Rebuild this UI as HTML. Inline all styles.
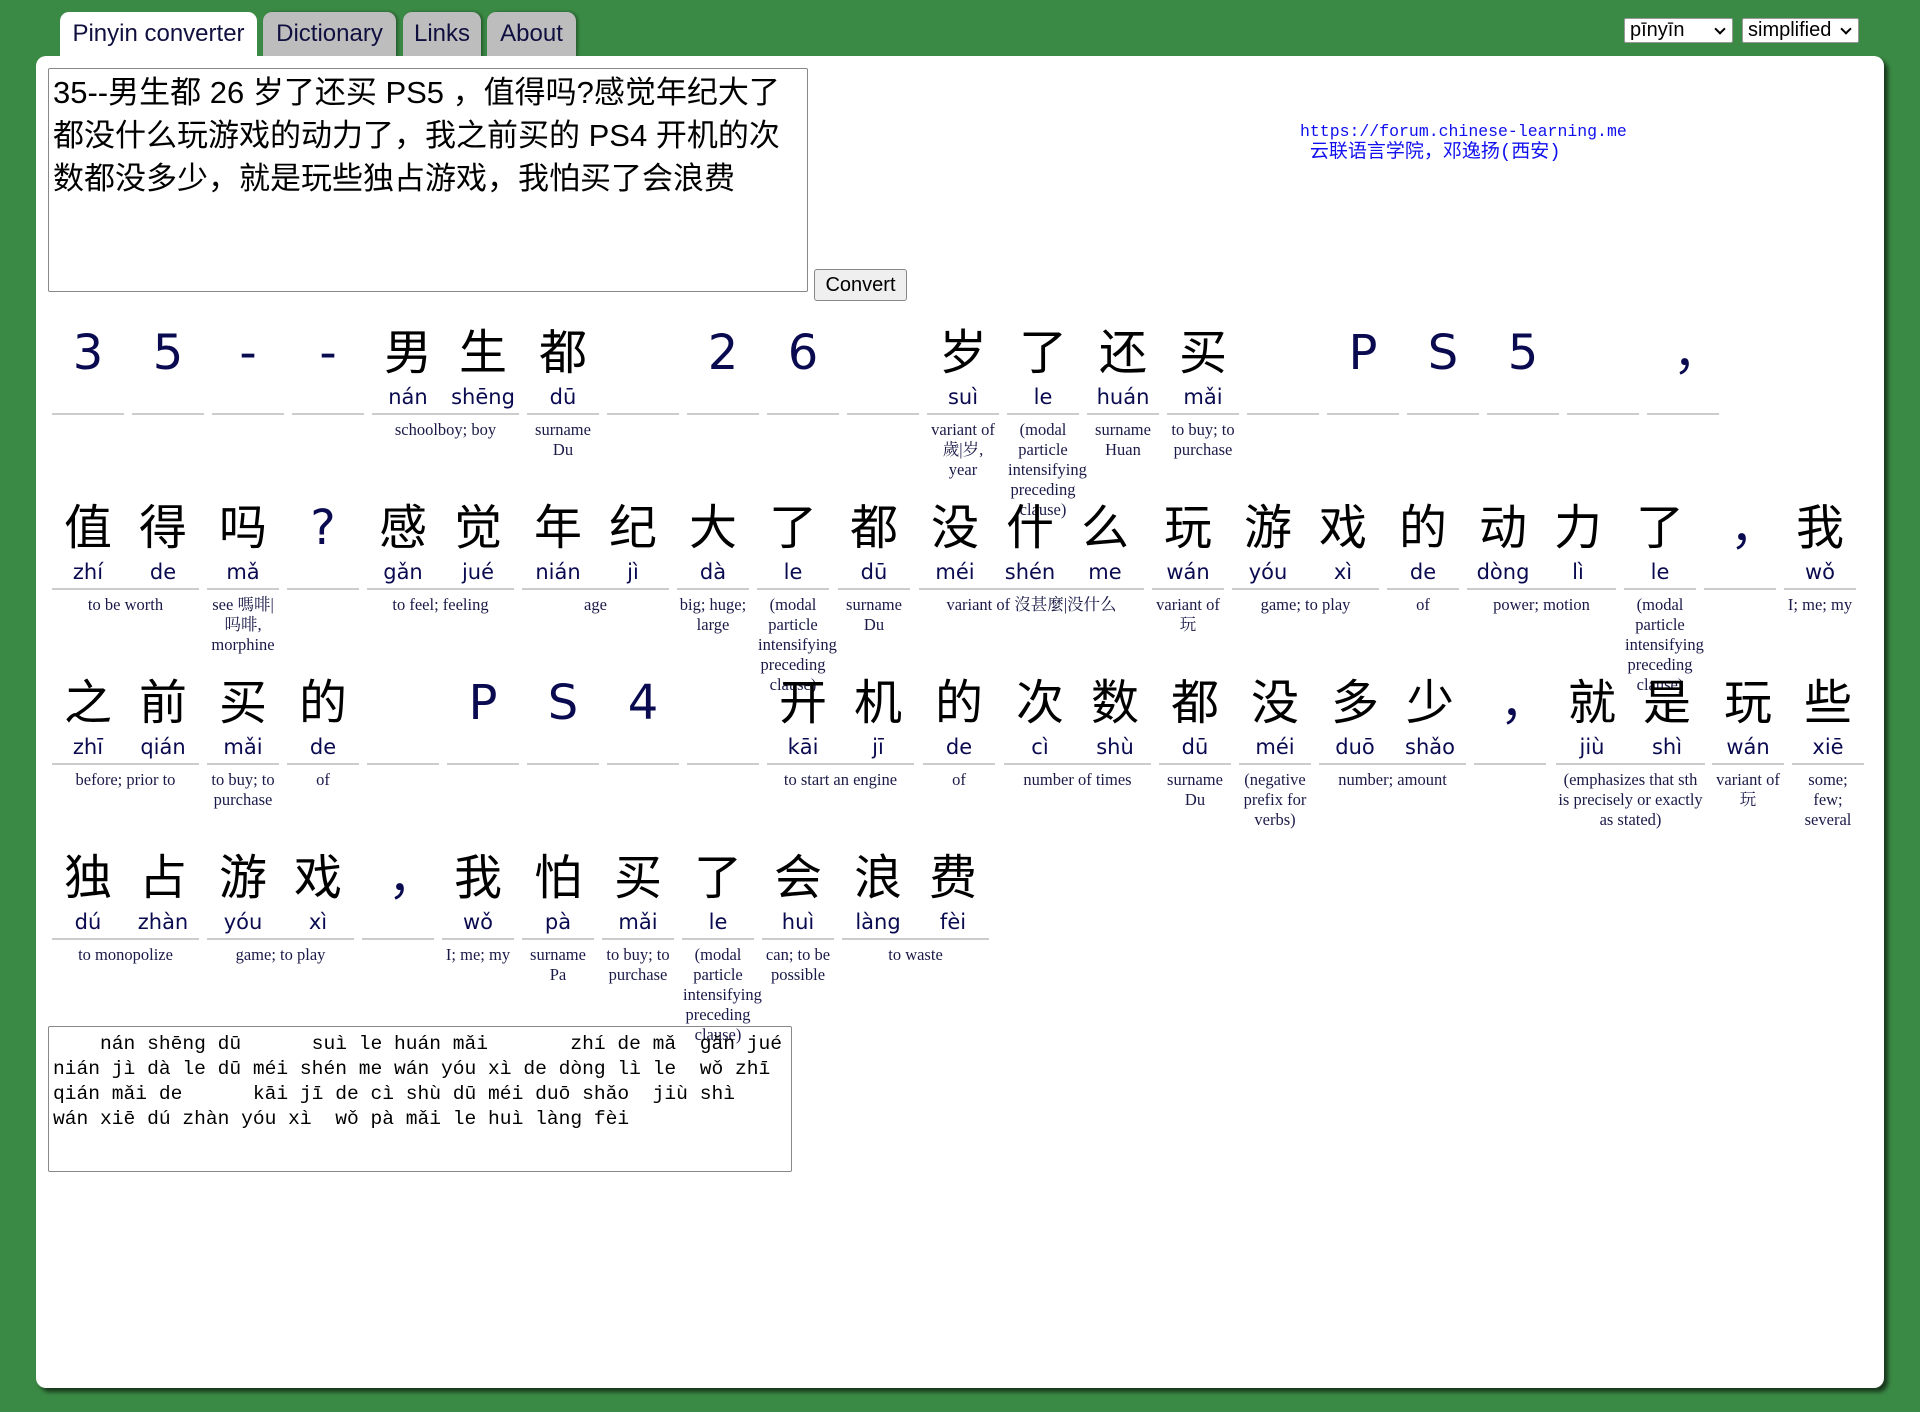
<!DOCTYPE html>
<html><head><meta charset="utf-8">
<style>
*{box-sizing:border-box}
body{margin:0;width:1920px;height:1412px;background:#3a8a45;position:relative;overflow:hidden;font-family:"Liberation Sans","Noto Sans CJK SC",sans-serif}
.tab{position:absolute;top:12px;height:46px;background:#bdbdbd;border-radius:9px 9px 0 0;font-size:24px;color:#101040;text-align:center;line-height:44px;box-shadow:2px 0 3px rgba(0,0,0,.35)}
.tab.a{background:#fff;z-index:2;box-shadow:none}
.panel{position:absolute;left:36px;top:56px;width:1848px;height:1332px;background:#fff;border-radius:10px;box-shadow:4px 4px 4px rgba(0,0,0,.6)}
.sel{position:absolute;top:18px;height:25px;background:#fff;border:1px solid #999;border-radius:2px;font-size:20px;line-height:23px;padding-left:5px;color:#000}
.sel:after{content:"";position:absolute;right:8px;top:6px;width:6px;height:6px;border-right:2px solid #000;border-bottom:2px solid #000;transform:rotate(45deg)}
.ta{position:absolute;left:48px;top:68px;width:760px;height:224px;border:1px solid #888;border-radius:2px;font-size:31px;line-height:43px;padding:2px 4px;color:#000;font-family:"Liberation Sans","Noto Sans CJK SC",sans-serif}
.btn{position:absolute;left:814px;top:269px;width:93px;height:32px;border:1px solid #888;border-radius:3px;background:#efefef;font-size:20px;text-align:center;line-height:30px}
.lnk{position:absolute;left:1300px;top:121px;font-family:"Liberation Mono","Noto Sans CJK SC",monospace;font-size:16.5px;line-height:21px;color:#1010ee;white-space:pre}
.lnk span{font-size:19px}
.row{position:absolute;left:0;top:0}
.t{position:absolute;text-align:center}
.h{display:flex;height:60px;font-size:48px;line-height:60px;font-family:"DejaVu Sans","Noto Sans CJK SC",sans-serif;color:#000}
.h span,.p span{display:block;flex:none;width:72px;margin-right:3px;text-align:center}
.h span:last-child,.p span:last-child{margin-right:0}
.h .l{color:#0a0a50}
.h .c{color:#0a0a50;position:relative;left:14px}
.p{display:flex;font-size:21px;line-height:30px;font-family:"DejaVu Sans","Noto Sans CJK SC",sans-serif;color:#0a0a50;margin-top:-1px;border-bottom:2px solid #ccc;height:33px}
.d{font-family:"Liberation Serif","Noto Serif CJK SC",serif;font-size:16.5px;line-height:20px;color:#1a1a48;margin-top:5px;padding:0 1px}
.out{position:absolute;left:48px;top:1026px;width:744px;height:146px;border:1px solid #888;border-radius:2px;font-family:"Liberation Mono","DejaVu Sans Mono",monospace;font-size:19.6px;line-height:25px;padding:5px 4px;white-space:pre;color:#000}
</style></head><body>
<div class="tab a" style="left:60px;width:197px">Pinyin converter</div>
<div class="tab" style="left:263px;width:133px">Dictionary</div>
<div class="tab" style="left:403px;width:78px">Links</div>
<div class="tab" style="left:487px;width:89px">About</div>
<div class="sel" style="left:1624px;width:109px">pīnyīn</div>
<div class="sel" style="left:1742px;width:117px">simplified</div>
<div class="panel"></div>
<div class="ta">35--男生都 26 岁了还买 PS5 ，值得吗?感觉年纪大了都没什么玩游戏的动力了，我之前买的 PS4 开机的次数都没多少，就是玩些独占游戏，我怕买了会浪费</div>
<div class="btn">Convert</div>
<div class="lnk">https://forum.chinese-learning.me
 <span>云联语言学院，邓逸扬(西安)</span></div>

<div class="row" style="top:323px">
<div class="t" style="left:52px;width:72px"><div class="h"><span class="l">3</span></div><div class="p"><span></span></div></div>
<div class="t" style="left:132px;width:72px"><div class="h"><span class="l">5</span></div><div class="p"><span></span></div></div>
<div class="t" style="left:212px;width:72px"><div class="h"><span class="l">-</span></div><div class="p"><span></span></div></div>
<div class="t" style="left:292px;width:72px"><div class="h"><span class="l">-</span></div><div class="p"><span></span></div></div>
<div class="t" style="left:372px;width:147px"><div class="h"><span>男</span><span>生</span></div><div class="p"><span>nán</span><span>shēng</span></div><div class="d">schoolboy; boy</div></div>
<div class="t" style="left:527px;width:72px"><div class="h"><span>都</span></div><div class="p"><span>dū</span></div><div class="d">surname Du</div></div>
<div class="t" style="left:607px;width:72px"><div class="h"><span></span></div><div class="p"><span></span></div></div>
<div class="t" style="left:687px;width:72px"><div class="h"><span class="l">2</span></div><div class="p"><span></span></div></div>
<div class="t" style="left:767px;width:72px"><div class="h"><span class="l">6</span></div><div class="p"><span></span></div></div>
<div class="t" style="left:847px;width:72px"><div class="h"><span></span></div><div class="p"><span></span></div></div>
<div class="t" style="left:927px;width:72px"><div class="h"><span>岁</span></div><div class="p"><span>suì</span></div><div class="d">variant of 歲|岁, year</div></div>
<div class="t" style="left:1007px;width:72px"><div class="h"><span>了</span></div><div class="p"><span>le</span></div><div class="d">(modal particle intensifying preceding clause)</div></div>
<div class="t" style="left:1087px;width:72px"><div class="h"><span>还</span></div><div class="p"><span>huán</span></div><div class="d">surname Huan</div></div>
<div class="t" style="left:1167px;width:72px"><div class="h"><span>买</span></div><div class="p"><span>mǎi</span></div><div class="d">to buy; to purchase</div></div>
<div class="t" style="left:1247px;width:72px"><div class="h"><span></span></div><div class="p"><span></span></div></div>
<div class="t" style="left:1327px;width:72px"><div class="h"><span class="l">P</span></div><div class="p"><span></span></div></div>
<div class="t" style="left:1407px;width:72px"><div class="h"><span class="l">S</span></div><div class="p"><span></span></div></div>
<div class="t" style="left:1487px;width:72px"><div class="h"><span class="l">5</span></div><div class="p"><span></span></div></div>
<div class="t" style="left:1567px;width:72px"><div class="h"><span></span></div><div class="p"><span></span></div></div>
<div class="t" style="left:1647px;width:72px"><div class="h"><span class="c">，</span></div><div class="p"><span></span></div></div>
</div>

<div class="row" style="top:498px">
<div class="t" style="left:52px;width:147px"><div class="h"><span>值</span><span>得</span></div><div class="p"><span>zhí</span><span>de</span></div><div class="d">to be worth</div></div>
<div class="t" style="left:207px;width:72px"><div class="h"><span>吗</span></div><div class="p"><span>mǎ</span></div><div class="d">see 嗎啡|吗啡, morphine</div></div>
<div class="t" style="left:287px;width:72px"><div class="h"><span class="l">?</span></div><div class="p"><span></span></div></div>
<div class="t" style="left:367px;width:147px"><div class="h"><span>感</span><span>觉</span></div><div class="p"><span>gǎn</span><span>jué</span></div><div class="d">to feel; feeling</div></div>
<div class="t" style="left:522px;width:147px"><div class="h"><span>年</span><span>纪</span></div><div class="p"><span>nián</span><span>jì</span></div><div class="d">age</div></div>
<div class="t" style="left:677px;width:72px"><div class="h"><span>大</span></div><div class="p"><span>dà</span></div><div class="d">big; huge; large</div></div>
<div class="t" style="left:757px;width:72px"><div class="h"><span>了</span></div><div class="p"><span>le</span></div><div class="d">(modal particle intensifying preceding clause)</div></div>
<div class="t" style="left:838px;width:72px"><div class="h"><span>都</span></div><div class="p"><span>dū</span></div><div class="d">surname Du</div></div>
<div class="t" style="left:919px;width:225px"><div class="h"><span>没</span><span>什</span><span>么</span></div><div class="p"><span>méi</span><span>shén</span><span>me</span></div><div class="d">variant of 沒甚麼|没什么</div></div>
<div class="t" style="left:1152px;width:72px"><div class="h"><span>玩</span></div><div class="p"><span>wán</span></div><div class="d">variant of 玩</div></div>
<div class="t" style="left:1232px;width:147px"><div class="h"><span>游</span><span>戏</span></div><div class="p"><span>yóu</span><span>xì</span></div><div class="d">game; to play</div></div>
<div class="t" style="left:1387px;width:72px"><div class="h"><span>的</span></div><div class="p"><span>de</span></div><div class="d">of</div></div>
<div class="t" style="left:1467px;width:149px"><div class="h"><span>动</span><span>力</span></div><div class="p"><span>dòng</span><span>lì</span></div><div class="d">power; motion</div></div>
<div class="t" style="left:1624px;width:72px"><div class="h"><span>了</span></div><div class="p"><span>le</span></div><div class="d">(modal particle intensifying preceding clause)</div></div>
<div class="t" style="left:1704px;width:72px"><div class="h"><span class="c">，</span></div><div class="p"><span></span></div></div>
<div class="t" style="left:1784px;width:72px"><div class="h"><span>我</span></div><div class="p"><span>wǒ</span></div><div class="d">I; me; my</div></div>
</div>

<div class="row" style="top:673px">
<div class="t" style="left:52px;width:147px"><div class="h"><span>之</span><span>前</span></div><div class="p"><span>zhī</span><span>qián</span></div><div class="d">before; prior to</div></div>
<div class="t" style="left:207px;width:72px"><div class="h"><span>买</span></div><div class="p"><span>mǎi</span></div><div class="d">to buy; to purchase</div></div>
<div class="t" style="left:287px;width:72px"><div class="h"><span>的</span></div><div class="p"><span>de</span></div><div class="d">of</div></div>
<div class="t" style="left:367px;width:72px"><div class="h"><span></span></div><div class="p"><span></span></div></div>
<div class="t" style="left:447px;width:72px"><div class="h"><span class="l">P</span></div><div class="p"><span></span></div></div>
<div class="t" style="left:527px;width:72px"><div class="h"><span class="l">S</span></div><div class="p"><span></span></div></div>
<div class="t" style="left:607px;width:72px"><div class="h"><span class="l">4</span></div><div class="p"><span></span></div></div>
<div class="t" style="left:687px;width:72px"><div class="h"><span></span></div><div class="p"><span></span></div></div>
<div class="t" style="left:767px;width:147px"><div class="h"><span>开</span><span>机</span></div><div class="p"><span>kāi</span><span>jī</span></div><div class="d">to start an engine</div></div>
<div class="t" style="left:923px;width:72px"><div class="h"><span>的</span></div><div class="p"><span>de</span></div><div class="d">of</div></div>
<div class="t" style="left:1004px;width:147px"><div class="h"><span>次</span><span>数</span></div><div class="p"><span>cì</span><span>shù</span></div><div class="d">number of times</div></div>
<div class="t" style="left:1159px;width:72px"><div class="h"><span>都</span></div><div class="p"><span>dū</span></div><div class="d">surname Du</div></div>
<div class="t" style="left:1239px;width:72px"><div class="h"><span>没</span></div><div class="p"><span>méi</span></div><div class="d">(negative prefix for verbs)</div></div>
<div class="t" style="left:1319px;width:147px"><div class="h"><span>多</span><span>少</span></div><div class="p"><span>duō</span><span>shǎo</span></div><div class="d">number; amount</div></div>
<div class="t" style="left:1474px;width:72px"><div class="h"><span class="c">，</span></div><div class="p"><span></span></div></div>
<div class="t" style="left:1556px;width:149px"><div class="h"><span>就</span><span>是</span></div><div class="p"><span>jiù</span><span>shì</span></div><div class="d">(emphasizes that sth is precisely or exactly as stated)</div></div>
<div class="t" style="left:1712px;width:72px"><div class="h"><span>玩</span></div><div class="p"><span>wán</span></div><div class="d">variant of 玩</div></div>
<div class="t" style="left:1792px;width:72px"><div class="h"><span>些</span></div><div class="p"><span>xiē</span></div><div class="d">some; few; several</div></div>
</div>

<div class="row" style="top:848px">
<div class="t" style="left:52px;width:147px"><div class="h"><span>独</span><span>占</span></div><div class="p"><span>dú</span><span>zhàn</span></div><div class="d">to monopolize</div></div>
<div class="t" style="left:207px;width:147px"><div class="h"><span>游</span><span>戏</span></div><div class="p"><span>yóu</span><span>xì</span></div><div class="d">game; to play</div></div>
<div class="t" style="left:362px;width:72px"><div class="h"><span class="c">，</span></div><div class="p"><span></span></div></div>
<div class="t" style="left:442px;width:72px"><div class="h"><span>我</span></div><div class="p"><span>wǒ</span></div><div class="d">I; me; my</div></div>
<div class="t" style="left:522px;width:72px"><div class="h"><span>怕</span></div><div class="p"><span>pà</span></div><div class="d">surname Pa</div></div>
<div class="t" style="left:602px;width:72px"><div class="h"><span>买</span></div><div class="p"><span>mǎi</span></div><div class="d">to buy; to purchase</div></div>
<div class="t" style="left:682px;width:72px"><div class="h"><span>了</span></div><div class="p"><span>le</span></div><div class="d">(modal particle intensifying preceding clause)</div></div>
<div class="t" style="left:762px;width:72px"><div class="h"><span>会</span></div><div class="p"><span>huì</span></div><div class="d">can; to be possible</div></div>
<div class="t" style="left:842px;width:147px"><div class="h"><span>浪</span><span>费</span></div><div class="p"><span>làng</span><span>fèi</span></div><div class="d">to waste</div></div>
</div>

<div class="out">    nán shēng dū      suì le huán mǎi       zhí de mǎ  gǎn jué
nián jì dà le dū méi shén me wán yóu xì de dòng lì le  wǒ zhī
qián mǎi de      kāi jī de cì shù dū méi duō shǎo  jiù shì
wán xiē dú zhàn yóu xì  wǒ pà mǎi le huì làng fèi</div>
</body></html>
